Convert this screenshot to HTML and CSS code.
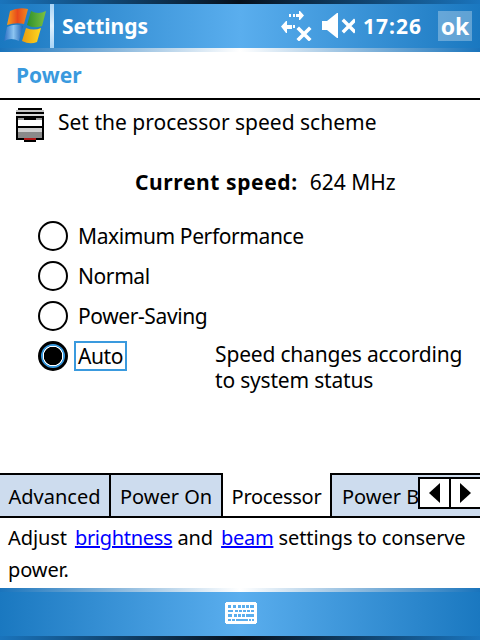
FILE: index.html
```html
<!DOCTYPE html>
<html lang="en">
<head>
  <meta charset="UTF-8">
  <title>Settings</title>
  <link rel="stylesheet" href="styles.css">
</head>
<body>
  <div class="titlebar">
    <div class="dark-strip"></div>
    <div class="bar-main">
      <svg class="winlogo" width="42" height="36" viewBox="0 0 42 36">
        <defs>
          <linearGradient id="red" x1="0" x2="1"><stop offset="0" stop-color="#f7a21c"/><stop offset=".5" stop-color="#e8491c"/><stop offset="1" stop-color="#f08a1e"/></linearGradient>
          <linearGradient id="green" x1="0" x2="1"><stop offset="0" stop-color="#2f8f2c"/><stop offset="1" stop-color="#7cc242"/></linearGradient>
          <linearGradient id="blue" x1="0" x2="1"><stop offset="0" stop-color="#2a6fc4"/><stop offset=".5" stop-color="#8cc4f0"/><stop offset="1" stop-color="#1f62b4"/></linearGradient>
          <linearGradient id="yellow" x1="0" x2="1"><stop offset="0" stop-color="#e89c10"/><stop offset="1" stop-color="#ffd820"/></linearGradient>
        </defs>
        <path d="M6 3 Q14 -1 24 1 L20 16 Q12 14 3 17 Z" fill="url(#red)"/>
        <path d="M27 3 Q34 7 42 3 L38 18 Q30 21 23 17 Z" fill="url(#green)"/>
        <path d="M3 19 Q11 15 19 18 L15 33 Q7 29 0 33 Z" fill="url(#blue)"/>
        <path d="M22 20 Q30 23 37 20 L33 34 Q26 37 18 33 Z" fill="url(#yellow)"/>
      </svg>
      <div class="bar-sep"></div>
      <div class="bar-title">Settings</div>
      <svg class="conn-icon" width="32" height="30" viewBox="0 0 32 30" fill="#fff">
        <path d="M8 3h2v3H8zM12 3h2v3h-2zM15 3h3V0h1l4 4.5-4 4.5h-1V6h-3z"/>
        <path d="M0 15.5l5-5.5h1v4h5v4H6v4H5zM12 14h2v3h-2z"/>
        <path d="M18 18l10 10M28 18L18 28" stroke="#fff" stroke-width="3.6" stroke-linecap="square" fill="none"/>
      </svg>
      <svg class="vol-icon" width="33" height="26" viewBox="0 0 33 26" fill="#fff">
        <path d="M0 8h5l10-8h1v25h-1L5 17H0z"/>
        <path d="M22 8l10 10M32 8L22 18" stroke="#fff" stroke-width="3.4" stroke-linecap="square" fill="none"/>
      </svg>
      <div class="bar-clock">17:26</div>
      <div class="ok-btn">ok</div>
    </div>
    <div class="fade-strip"></div>
  </div>

  <div class="page-heading">Power</div>

  <div class="intro">
    <svg class="cpu-icon" width="28" height="34" viewBox="0 0 28 34" shape-rendering="crispEdges">
      <rect x="2" y="0" width="24" height="2" fill="#000"/>
      <rect x="0" y="2" width="28" height="2" fill="#c4c4c4"/>
      <rect x="0" y="4" width="28" height="2" fill="#000"/>
      <rect x="0" y="6" width="28" height="2" fill="#d8d8d8"/>
      <rect x="0" y="8" width="28" height="2" fill="#000"/>
      <rect x="0" y="10" width="2" height="22" fill="#000"/>
      <rect x="26" y="10" width="2" height="22" fill="#000"/>
      <rect x="2" y="10" width="24" height="2" fill="#9a9a9a"/>
      <rect x="8" y="10" width="12" height="2" fill="#000"/>
      <rect x="2" y="12" width="24" height="8" fill="#fff"/>
      <rect x="2" y="18" width="24" height="2" fill="#000"/>
      <rect x="2" y="20" width="24" height="4" fill="#d0d0d0"/>
      <rect x="2" y="24" width="24" height="6" fill="#8a8a8a"/>
      <rect x="2" y="30" width="24" height="2" fill="#000"/>
      <rect x="8" y="30" width="12" height="2" fill="#b01818"/>
      <rect x="8" y="32" width="12" height="2" fill="#000"/>
    </svg>
    <span>Set the processor speed scheme</span>
  </div>

  <div class="speed"><b>Current speed:</b><span>624 MHz</span></div>

  <div class="options">
    <div class="option"><span class="radio"></span><span class="option-label">Maximum Performance</span></div>
    <div class="option"><span class="radio"></span><span class="option-label">Normal</span></div>
    <div class="option"><span class="radio"></span><span class="option-label">Power-Saving</span></div>
    <div class="option">
      <span class="radio selected"></span><span class="option-label focused">Auto</span>
      <div class="option-note">Speed changes according<br>to system status</div>
    </div>
  </div>

  <div class="tabs">
    <div class="tab tab-advanced">Advanced</div>
    <div class="tab tab-poweron">Power On</div>
    <div class="tab tab-current">Processor</div>
    <div class="tab tab-beam">Power Beam</div>
    <div class="tab-scroll">
      <div class="scroll-btn"><div class="arrow-left"></div></div>
      <div class="scroll-btn"><div class="arrow-right"></div></div>
    </div>
  </div>

  <div class="hint">
    Adjust <a href="#" class="gap">brightness</a> and <a href="#" class="gap">beam</a> settings to conserve<br>power.
  </div>

  <div class="bottombar">
    <div class="fade-strip"></div>
    <div class="bar-main bar-center">
      <svg class="kbd" width="32" height="22" viewBox="0 0 32 22" shape-rendering="crispEdges">
        <rect x="1" y="0" width="30" height="22" fill="#fff"/>
        <rect x="0" y="1" width="32" height="20" fill="#fff"/>
        <g fill="#5aaeee">
          <path d="M3 3h3v3H3zM8 3h3v3H8zM13 3h3v3h-3zM17 3h3v3h-3zM21 3h3v3h-3zM25 3h4v3h-4z"/>
          <path d="M3 8h5v2H3zM10 8h3v2h-3zM14 8h3v2h-3zM18 8h3v2h-3zM22 8h3v2h-3zM26 8h3v2h-3z"/>
          <path d="M3 12h4v3H3zM9 12h3v3H9zM13 12h3v3h-3zM17 12h3v3h-3zM21 12h8v3h-8z"/>
          <path d="M3 17h3v2H3zM7 17h3v2H7zM11 17h12v2H11zM24 17h2v2h-2zM27 17h2v2h-2z"/>
        </g>
      </svg>
    </div>
    <div class="dark-strip"></div>
  </div>
</body>
</html>
```

FILE: styles.css
```css
body {
  margin: 0;
  width: 480px;
  height: 640px;
  overflow: hidden;
  display: flex;
  flex-direction: column;
  background: #fff;
  color: #000;
  font-family: 'Noto Sans', sans-serif;
  font-size: 21px;
}

/* Title and bottom bars */
.dark-strip {
  height: 4px;
  background: linear-gradient(to right, #1a74bc, #06101c 50%, #1a74bc);
}

.fade-strip {
  height: 4px;
  background: linear-gradient(to right, #1a74bc, #ffffff 50%, #1a74bc);
}

.bar-main {
  height: 44px;
  display: flex;
  align-items: center;
  background: linear-gradient(to right, #1a78c0, #5aaeee 50%, #1a78c0);
  color: #fff;
}

.bar-center {
  justify-content: center;
}

.winlogo {
  margin-left: 4px;
  flex: none;
}

.bar-sep {
  width: 4px;
  height: 44px;
  margin-left: 4px;
  background: linear-gradient(to bottom, #a8d4f6, #e0f0fc 50%, #a8d4f6);
}

.bar-title {
  margin-left: 8px;
  font-weight: bold;
  font-size: 21px;
  flex: 1;
}

.conn-icon {
  flex: none;
}

.vol-icon {
  margin-left: 9px;
  flex: none;
}

.bar-clock {
  margin-left: 8px;
  width: 60px;
  font-weight: bold;
  font-size: 21px;
  letter-spacing: 1px;
}

.ok-btn {
  margin-left: 15px;
  margin-right: 8px;
  width: 34px;
  height: 30px;
  line-height: 30px;
  text-align: center;
  font-weight: bold;
  font-size: 23px;
  background: rgba(255, 255, 255, 0.3);
}

/* Page head */
.page-heading {
  height: 46px;
  line-height: 46px;
  padding-left: 16px;
  font-weight: bold;
  font-size: 21px;
  color: #3a9ade;
  border-bottom: 2px solid #000;
}

.intro {
  height: 44px;
  display: flex;
  align-items: center;
  padding-left: 16px;
  gap: 14px;
}

.cpu-icon {
  margin-top: 6px;
}

.speed {
  margin-top: 23px;
  height: 30px;
  line-height: 30px;
  padding-left: 135px;
  display: flex;
  gap: 12px;
}

.speed b {
  letter-spacing: 0.6px;
}

/* Radio list */
.options {
  margin-top: 19px;
  padding-left: 38px;
}

.option {
  height: 40px;
  display: flex;
  align-items: center;
}

.radio {
  box-sizing: border-box;
  flex: none;
  width: 30px;
  height: 30px;
  border: 2px solid #000;
  border-radius: 50%;
  background: #fff;
}

.radio.selected {
  border-width: 3px;
  background: radial-gradient(circle, #000 9px, #fff 9.5px, #fff 10px, #3a9ade 10.5px);
}

.option-label {
  box-sizing: border-box;
  height: 30px;
  line-height: 26px;
  padding: 0 2px;
  border: 2px solid transparent;
  margin-left: 6px;
  letter-spacing: -0.4px;
}

.option-label.focused {
  border-color: #3a9ade;
}

.option-note {
  margin-left: 88px;
  margin-top: 22px;
  line-height: 26px;
  white-space: nowrap;
  letter-spacing: -0.2px;
}

/* Tabs */
.tabs {
  position: relative;
  margin-top: 97px;
  height: 45px;
  display: flex;
  overflow: hidden;
  border-bottom: 2px solid #000;
  box-sizing: border-box;
  font-size: 20px;
}

.tab {
  box-sizing: border-box;
  flex: none;
  height: 43px;
  line-height: 43px;
  background: #cddcee;
  border-top: 2px solid #000;
  border-right: 2px solid #000;
  text-align: center;
  white-space: nowrap;
}

.tab-advanced {
  width: 111px;
}

.tab-poweron {
  width: 112px;
}

.tab-current {
  width: 109px;
  background: #fff;
  border-top: none;
  line-height: 47px;
  letter-spacing: -0.3px;
}

.tab-beam {
  width: 160px;
  padding-left: 10px;
  text-align: left;
  border-right: none;
}

.tab-scroll {
  position: absolute;
  right: 0;
  top: 4px;
  display: flex;
  width: 62px;
  height: 32px;
  box-sizing: border-box;
  border: 2px solid #000;
  border-right: none;
  background: #fff;
}

.scroll-btn {
  flex: 1;
  display: flex;
  align-items: center;
  justify-content: center;
}

.scroll-btn + .scroll-btn {
  border-left: 2px solid #000;
}

.arrow-left {
  width: 0;
  height: 0;
  border-top: 10px solid transparent;
  border-bottom: 10px solid transparent;
  border-right: 11px solid #000;
}

.arrow-right {
  width: 0;
  height: 0;
  border-top: 10px solid transparent;
  border-bottom: 10px solid transparent;
  border-left: 11px solid #000;
}

/* Help text */
.hint {
  height: 70px;
  padding: 4px 0 0 8px;
  box-sizing: border-box;
  font-size: 20px;
  line-height: 32px;
  letter-spacing: -0.1px;
  white-space: nowrap;
}

.hint a {
  color: #0000ff;
  letter-spacing: -0.3px;
}

.gap {
  margin-left: 3px;
}

.kbd {
  display: block;
  margin: 0 0 2px 2px;
}
```
